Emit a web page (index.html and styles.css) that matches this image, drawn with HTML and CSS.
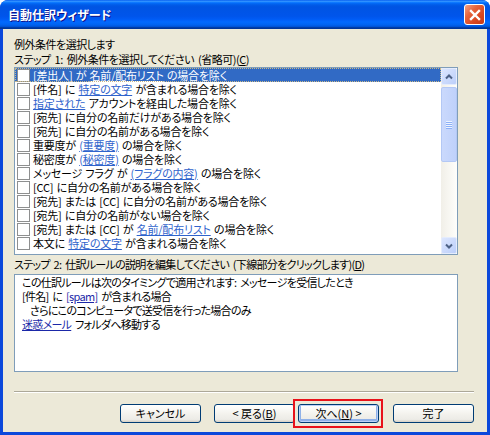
FILE: index.html
```html
<!DOCTYPE html>
<html lang="ja">
<head>
    <meta charset="UTF-8">
    <title>自動仕訳ウィザード</title>
    <link rel="stylesheet" href="styles.css">
</head>
<body>

    <div class="window">
        <!-- Title bar -->
        <div class="titlebar">
            <span class="title">自動仕訳ウィザード</span>
            <span class="close">
                <svg width="12" height="12" viewBox="0 0 12 12">
                    <path d="M2 2 L10 10 M10 2 L2 10" stroke="#fff" stroke-width="2.4" stroke-linecap="square"/>
                </svg>
            </span>
        </div>

        <div class="body">
            <p class="label">例外条件を選択します</p>
            <p class="label">ステップ 1: 例外条件を選択してください (省略可)(<u>C</u>)</p>

            <!-- Step 1 list -->
            <div class="listbox">
                <ul class="rules">
                    <li class="rule selected"><span class="check"></span>[差出人] が <a>名前/配布リスト</a> の場合を除く</li>
                    <li class="rule"><span class="check"></span>[件名] に <a>特定の文字</a> が含まれる場合を除く</li>
                    <li class="rule"><span class="check"></span><a>指定された</a> アカウントを経由した場合を除く</li>
                    <li class="rule"><span class="check"></span>[宛先] に自分の名前だけがある場合を除く</li>
                    <li class="rule"><span class="check"></span>[宛先] に自分の名前がある場合を除く</li>
                    <li class="rule"><span class="check"></span>重要度が <a>(重要度)</a> の場合を除く</li>
                    <li class="rule"><span class="check"></span>秘密度が <a>(秘密度)</a> の場合を除く</li>
                    <li class="rule"><span class="check"></span>メッセージ フラグ が <a>(フラグの内容)</a> の場合を除く</li>
                    <li class="rule"><span class="check"></span>[CC] に自分の名前がある場合を除く</li>
                    <li class="rule"><span class="check"></span>[宛先] または [CC] に自分の名前がある場合を除く</li>
                    <li class="rule"><span class="check"></span>[宛先] に自分の名前がない場合を除く</li>
                    <li class="rule"><span class="check"></span>[宛先] または [CC] が <a>名前/配布リスト</a> の場合を除く</li>
                    <li class="rule"><span class="check"></span>本文に <a>特定の文字</a> が含まれる場合を除く</li>
                </ul>
                <div class="scrollbar">
                    <div class="scroll-btn">
                        <svg width="8" height="6" viewBox="0 0 8 6"><path d="M1 4.5 L4 1.5 L7 4.5" fill="none" stroke="#4D6185" stroke-width="2"/></svg>
                    </div>
                    <div class="thumb">
                        <svg width="8" height="8" viewBox="0 0 8 8">
                            <path d="M1 0.5 H7 M1 2.5 H7 M1 4.5 H7 M1 6.5 H7" stroke="#EEF4FE" stroke-width="1"/>
                            <path d="M1 1.5 H7 M1 3.5 H7 M1 5.5 H7 M1 7.5 H7" stroke="#8CB0F8" stroke-width="1"/>
                        </svg>
                    </div>
                    <div class="track"></div>
                    <div class="scroll-btn">
                        <svg width="8" height="6" viewBox="0 0 8 6"><path d="M1 1.5 L4 4.5 L7 1.5" fill="none" stroke="#4D6185" stroke-width="2"/></svg>
                    </div>
                </div>
            </div>

            <!-- Step 2 description -->
            <p class="label step2">ステップ 2: 仕訳ルールの説明を編集してください (下線部分をクリックします)(<u>D</u>)</p>
            <div class="desc">
                <div>この仕訳ルールは次のタイミングで適用されます: メッセージを受信したとき</div>
                <div>[件名] に <a class="dark">[spam]</a> が含まれる場合</div>
                <div class="indent">さらにこのコンピュータで送受信を行った場合のみ</div>
                <div><a class="dark">迷惑メール</a> フォルダへ移動する</div>
            </div>

            <div class="separator"></div>

            <!-- Buttons -->
            <div class="buttons">
                <button class="btn cancel">キャンセル</button>
                <button class="btn back">&lt; 戻る(<u>B</u>)</button>
                <button class="btn next">次へ(<u>N</u>) &gt;</button>
                <button class="btn">完了</button>
            </div>
        </div>
    </div>

</body>
</html>
```

FILE: styles.css
```css
/* General */
body {
    margin: 0;
    font-family: "Noto Sans CJK JP", "Liberation Sans", sans-serif;
    font-size: 11px;
    font-feature-settings: "palt";
    color: #000;
    background: #fff;
}

/* Window frame */
.window {
    width: 490px;
    height: 435px;
    display: flex;
    flex-direction: column;
    background: #0B48DB;
    border-radius: 8px 8px 0 0;
    overflow: hidden;
}

.titlebar {
    height: 29px;
    flex: none;
    display: flex;
    align-items: center;
    justify-content: space-between;
    padding: 0 5px 0 8px;
    background: linear-gradient(to bottom, #0058EE 0%, #3593FF 4%, #288EFF 6%, #127DFF 8%, #036FFC 10%, #0262EE 14%, #0057E5 20%, #0054E3 24%, #0055EB 56%, #005BF5 66%, #026AFE 76%, #0062EF 86%, #0052D6 92%, #0040AB 94%, #003092 100%);
}

.title {
    color: #fff;
    font-weight: bold;
    font-size: 12px;
    text-shadow: 1px 1px #0F1089;
}

.close {
    width: 19px;
    height: 19px;
    display: flex;
    align-items: center;
    justify-content: center;
    border: 1px solid #fff;
    border-radius: 3px;
    background: linear-gradient(135deg, #F4A285 0%, #E5643D 35%, #D9461F 70%, #C83A17 100%);
}

.body {
    flex: 1;
    margin: 0 3px 3px;
    padding: 8px 13px 0 11px;
    background: #ECE9D8;
}

.label {
    margin: 0;
    line-height: 15px;
    letter-spacing: -0.5px;
    word-spacing: 2px;
    white-space: nowrap;
}

.step2 {
    margin-top: 2px;
    letter-spacing: -0.7px;
}

/* Step 1 list */
.listbox {
    width: 444px;
    height: 188px;
    box-sizing: border-box;
    border: 1px solid #7F9DB9;
    background: #fff;
    display: flex;
}

.rules {
    flex: 1;
    margin: 0;
    padding: 0;
    list-style: none;
    overflow: hidden;
}

.rule {
    height: 14px;
    line-height: 14px;
    display: flex;
    align-items: center;
    white-space: pre;
    letter-spacing: -0.2px;
    word-spacing: 1px;
}

.rule a {
    color: #2F63CC;
    text-decoration: underline;
}

.rule.selected {
    background: #316AC5;
    color: #fff;
    outline: 1px dotted #C9B98A;
    outline-offset: -1px;
}

.rule.selected a {
    color: #fff;
}

.check {
    width: 11px;
    height: 11px;
    flex: none;
    border: 1px solid #8E8F8F;
    background: #fff;
    margin: 0 3px 0 2px;
}

/* Scrollbar */
.scrollbar {
    width: 16px;
    flex: none;
    display: flex;
    flex-direction: column;
    background: linear-gradient(to right, #F1EFE8, #FEFEFB);
}

.scroll-btn {
    height: 17px;
    flex: none;
    box-sizing: border-box;
    border: 1px solid #E4ECFD;
    border-radius: 2px;
    background: linear-gradient(135deg, #DCE6FE, #BCCFFA);
    display: flex;
    align-items: center;
    justify-content: center;
}

.thumb {
    height: 75px;
    margin-top: 2px;
    box-sizing: border-box;
    border: 1px solid #B3C8F5;
    border-radius: 2px;
    background: linear-gradient(to right, #CAD9FC, #BFD1FB);
    display: flex;
    align-items: center;
    justify-content: center;
}

.track {
    flex: 1;
}

/* Step 2 description */
.desc {
    width: 444px;
    height: 98px;
    box-sizing: border-box;
    margin-top: 2px;
    border: 1px solid #7F9DB9;
    background: #fff;
    padding-left: 7px;
    line-height: 14px;
    letter-spacing: -0.7px;
    word-spacing: 2px;
    white-space: nowrap;
}

.desc .indent {
    padding-left: 8px;
}

.dark {
    color: #1B28A8;
    text-decoration: underline;
}

.separator {
    margin-top: 19px;
    border-top: 1px solid #ACA899;
    border-bottom: 1px solid #fff;
}

/* Buttons */
.buttons {
    margin-top: 11px;
    display: flex;
    justify-content: flex-end;
}

.btn {
    width: 81px;
    height: 19px;
    padding: 0;
    box-sizing: border-box;
    font: inherit;
    color: #000;
    border: 1px solid #003C74;
    border-radius: 3px;
    background: linear-gradient(to bottom, #FFFFFF 0%, #F4F3EE 50%, #ECEBE6 85%, #D6D0C5 100%);
    line-height: 15px;
}

.cancel {
    margin-right: 13px;
}

.back {
    margin-right: 3px;
}

.next {
    position: relative;
    margin-right: 14px;
    box-shadow: inset 0 0 0 1px #BCD2F8, inset 0 -1px 0 2px #8FB1E8;
}

/* red highlight drawn over the default button */
.next::after {
    content: "";
    position: absolute;
    top: -6px;
    left: -6px;
    right: -5px;
    bottom: -6px;
    border: 2px solid #E8121A;
}
```
